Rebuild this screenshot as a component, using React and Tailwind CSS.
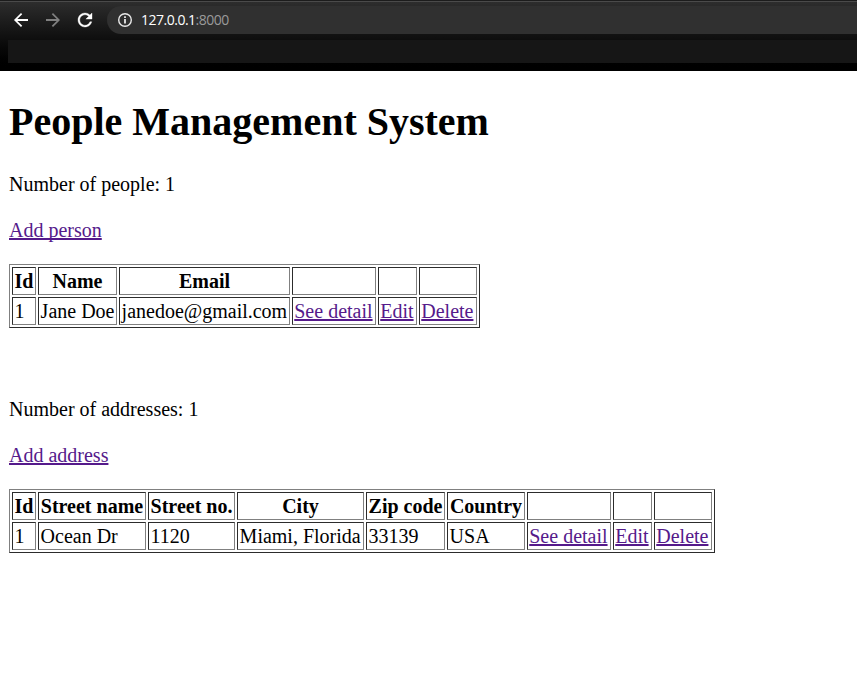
import React from "react";

const PEOPLE = {
  columns: [
    { label: "Id", width: 24 },
    { label: "Name", width: 79 },
    { label: "Email", width: 171 },
    { label: "", width: 84 },
    { label: "", width: 39 },
    { label: "", width: 58 },
  ],
  row: ["1", "Jane Doe", "janedoe@gmail.com"],
};

const ADDRESSES = {
  columns: [
    { label: "Id", width: 24 },
    { label: "Street name", width: 108 },
    { label: "Street no.", width: 87 },
    { label: "City", width: 127 },
    { label: "Zip code", width: 79 },
    { label: "Country", width: 78 },
    { label: "", width: 84 },
    { label: "", width: 39 },
    { label: "", width: 58 },
  ],
  row: ["1", "Ocean Dr", "1120", "Miami, Florida", "33139", "USA"],
};

const ACTIONS = ["See detail", "Edit", "Delete"];

const ICON_BOX = "-1.71 -1.71 27.42 27.42";

function Link({ children }) {
  return (
    <a
      href="#"
      className="text-[#551a8b] underline decoration-2 underline-offset-1 [text-decoration-skip-ink:none]"
    >
      {children}
    </a>
  );
}

const CELL =
  "h-7 whitespace-nowrap border border-t-[#2c2c2c] border-l-[#2c2c2c] border-r-[#808080] border-b-[#808080] p-0 leading-[26px]";

function DataTable({ columns, row }) {
  const width = columns.reduce((sum, c) => sum + c.width + 2, 4);
  return (
    <table
      className="table-fixed border-separate border-spacing-[2px] border border-t-[#808080] border-l-[#808080] border-r-[#2c2c2c] border-b-[#2c2c2c]"
      style={{ width }}
    >
      <colgroup>
        {columns.map((c, i) => (
          <col key={i} style={{ width: c.width }} />
        ))}
      </colgroup>
      <thead>
        <tr>
          {columns.map((c, i) => (
            <th key={i} className={`${CELL} text-center font-bold`}>
              {c.label}
            </th>
          ))}
        </tr>
      </thead>
      <tbody>
        <tr>
          {row.map((value, i) => (
            <td key={i} className={`${CELL} pl-[1.6px]`}>
              {value}
            </td>
          ))}
          {ACTIONS.map((label) => (
            <td key={label} className={`${CELL} pl-[1.25px]`}>
              <Link>{label}</Link>
            </td>
          ))}
        </tr>
      </tbody>
    </table>
  );
}

function BrowserBar() {
  return (
    <header className="h-[71px] border-t border-[#1c1c1c] bg-linear-to-b from-[#2e2e2e] from-0% via-[#050505] via-75% to-black">
      <div className="h-px bg-[#4a4a4a]" />
      <div className="flex h-[38px] items-center pb-[2px] pl-[9px]">
        <svg className="size-6 shrink-0" viewBox={ICON_BOX} fill="#fff">
          <path d="M20 11H7.83l5.59-5.59L12 4l-8 8 8 8 1.41-1.41L7.83 13H20v-2z" />
        </svg>
        <svg className="ml-2 size-6 shrink-0" viewBox={ICON_BOX} fill="#808080">
          <path d="M12 4l-1.41 1.41L16.17 11H4v2h12.17l-5.58 5.59L12 20l8-8z" />
        </svg>
        <svg className="ml-2 size-6 shrink-0" viewBox={ICON_BOX} fill="#fff" stroke="#fff" strokeWidth="0.4">
          <path d="M17.65 6.35C16.2 4.9 14.21 4 12 4c-4.42 0-7.99 3.58-7.99 8s3.57 8 7.99 8c3.73 0 6.84-2.55 7.73-6h-2.08c-.82 2.33-3.04 4-5.65 4-3.31 0-6-2.69-6-6s2.69-6 6-6c1.66 0 3.14.69 4.22 1.78L13 11h7V4l-2.35 2.35z" />
        </svg>
        <div className="ml-[10px] flex h-7 flex-1 items-center rounded-l-full bg-[#303030] pl-[10px]">
          <svg className="size-4 shrink-0" viewBox="0 0 16 16" fill="none" stroke="#e8e8e8" strokeWidth="1.4">
            <circle cx="8" cy="8" r="6.3" />
            <path d="M8 7v4.5M8 4.3v1.6" strokeWidth="1.8" />
          </svg>
          <span className="ml-2 font-['Open_Sans',sans-serif] text-[14px] leading-4 tracking-[-0.5px] text-white">
            127.0.0.1<span className="text-[#9a9a9a]">:8000</span>
          </span>
        </div>
      </div>
      <div className="ml-2 h-[23px] bg-[#161616]" />
    </header>
  );
}

export default function App() {
  return (
    <div className="min-h-screen bg-white">
      <BrowserBar />
      <main className="pl-[9px] font-['Liberation_Serif',serif] text-[20px] leading-[23px] text-black">
        <h1 className="pt-7 text-[40px] leading-[46px] font-bold">People Management System</h1>
        <p className="mt-7">Number of people: 1</p>
        <p className="mt-[23px]">
          <Link>Add person</Link>
        </p>
        <div className="mt-[22px]">
          <DataTable {...PEOPLE} />
        </div>
        <p className="mt-[70px]">Number of addresses: 1</p>
        <p className="mt-[23px]">
          <Link>Add address</Link>
        </p>
        <div className="mt-[22px]">
          <DataTable {...ADDRESSES} />
        </div>
      </main>
    </div>
  );
}
